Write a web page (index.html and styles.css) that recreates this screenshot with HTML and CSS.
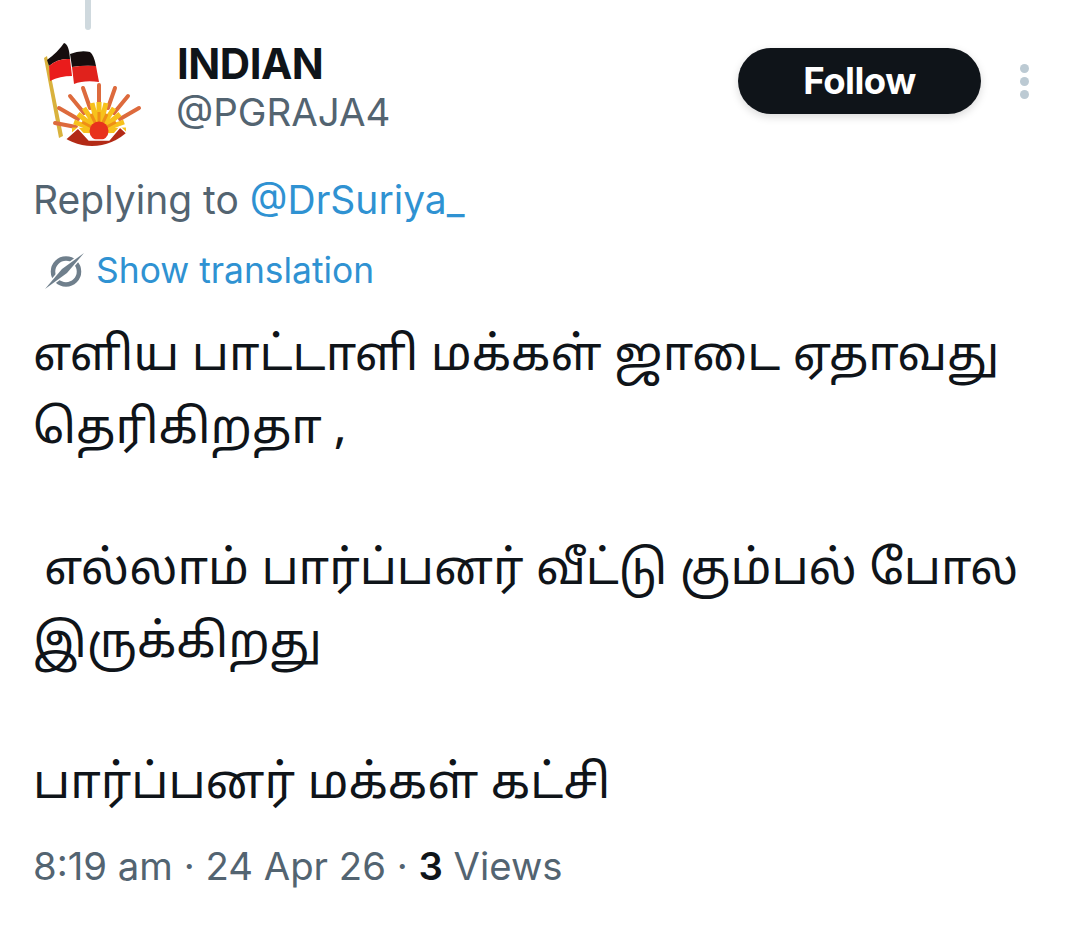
FILE: index.html
```html
<!DOCTYPE html>
<html lang="en">
<head>
    <meta charset="UTF-8" />
    <title>INDIAN on X</title>
    <link rel="stylesheet" href="styles.css">
</head>
<body>
    <div class="thread-line"></div>

    <header class="author">
        <svg class="avatar" viewBox="42 41 100 106" width="100" height="106" aria-label="Avatar">
            <defs>
                <filter id="soft"><feGaussianBlur stdDeviation="0.5"/></filter>
                <clipPath id="round"><circle cx="92" cy="95" r="51"/></clipPath>
            </defs>
            <g filter="url(#soft)">
                <path d="M44 58 L47 56 L63 136 L59 138Z" fill="#d9b23e"/>
                <path d="M47 60 Q58 52 64 43 Q69 44 70 59 Q58 58 49 66Z" fill="#15100f"/>
                <path d="M49 66 Q58 58 70 59 L72 76 Q60 76 50 81Z" fill="#ea1f1a"/>
                <path d="M70 54 Q80 50 90 52 Q94 55 96 66 Q84 65 72 67Z" fill="#15100f"/>
                <path d="M72 67 Q84 65 96 66 L99 82 Q84 80 74 84Z" fill="#e0201c"/>
                <path d="M55 123 L76 127 M59 108 L78 119 M70 96 L84 113 M83 88 L90 108 M99 85 V106 M115 88 L108 108 M128 96 L114 113 M139 108 L120 119" stroke="#dd6a3c" stroke-width="4" stroke-linecap="round"/>
                <path d="M72 130 L99 131 M74 122 L99 131 M78 114 L99 131 M84 108 L99 131 M92 103 L99 131 M99 102 V131 M106 103 L99 131 M114 108 L99 131 M120 114 L99 131 M124 122 L99 131 M126 130 L99 131" stroke="#f7c11c" stroke-width="5"/>
                <path d="M82 122 L99 131 M91 114 L99 131 M99 112 V131 M107 114 L99 131 M116 122 L99 131" stroke="#ef8f14" stroke-width="3"/>
                <circle cx="99" cy="131" r="9.5" fill="#e8311f"/>
                <g clip-path="url(#round)">
                    <path d="M60 144 L78 128 L89 140 L109 140 L120 127 L134 140 L130 150 L62 150Z" fill="#b32a18" stroke="#fff" stroke-width="1.5"/>
                </g>
            </g>
        </svg>
        <div class="names">
            <div class="display-name">INDIAN</div>
            <div class="handle">@PGRAJA4</div>
        </div>
        <button class="follow-btn">Follow</button>
        <div class="more-dots"><span></span><span></span><span></span></div>
    </header>

    <div class="replying">Replying to <a href="#">@DrSuriya_</a></div>

    <div class="translate">
        <svg class="translate-icon" viewBox="44 250 42 40" width="42" height="40" aria-hidden="true">
            <circle cx="66" cy="270.5" r="13" fill="none" stroke="#6f7f8c" stroke-width="4.5"/>
            <path d="M45 288 L62 268 L84 252 L67 272Z" fill="#fff" stroke="#fff" stroke-width="3"/>
            <path d="M45 288 L62 268 L84 252 L67 272Z" fill="#6f7f8c"/>
        </svg>
        <a href="#">Show translation</a>
    </div>

    <div class="tweet-text">
        <p>எளிய பாட்டாளி மக்கள் ஜாடை ஏதாவது தெரிகிறதா ,</p>
        <p class="indent">எல்லாம் பார்ப்பனர் வீட்டு கும்பல் போல இருக்கிறது</p>
        <p>பார்ப்பனர் மக்கள் கட்சி</p>
    </div>

    <div class="meta">8:19 am · 24 Apr 26 · <strong>3</strong> Views</div>
</body>
</html>
```

FILE: styles.css
```css
body {
    font-family: Inter, "Liberation Sans", sans-serif;
    margin: 0;
    padding: 0 34px;
    height: 925px;
    box-sizing: border-box;
    overflow: hidden;
    background-color: #ffffff;
    color: #0f1419;
}
a {
    color: #2f92d2;
    text-decoration: none;
}
.thread-line {
    width: 6px;
    height: 30px;
    margin-left: 51px;
    border-radius: 0 0 3px 3px;
    background-color: #cfd9de;
}
.author {
    display: flex;
    align-items: flex-start;
    margin-top: 11px;
}
.avatar {
    flex: none;
    margin-left: 8px;
}
.names {
    margin-left: 35px;
    flex: 1;
}
.display-name {
    font-size: 42px;
    font-weight: 700;
    line-height: 46px;
    letter-spacing: -0.5px;
}
.handle {
    margin-left: -1px;
    font-size: 38.5px;
    line-height: 50px;
    color: #536471;
}
.follow-btn {
    width: 243px;
    height: 66px;
    margin-top: 7px;
    border: none;
    border-radius: 33px;
    background-color: #0f1419;
    color: #fff;
    font: 700 36.5px Inter, sans-serif;
    letter-spacing: -0.5px;
    box-shadow: 0 3px 8px rgba(0,0,0,0.15);
}
.more-dots {
    display: flex;
    flex-direction: column;
    gap: 4px;
    margin: 23px 17px 0 39px;
}
.more-dots span {
    width: 9px;
    height: 9px;
    border-radius: 50%;
    background-color: #bccad3;
}
.replying {
    margin-top: 28px;
    margin-left: -1px;
    font-size: 39px;
    line-height: 50px;
    color: #536471;
}
.translate {
    display: flex;
    align-items: center;
    margin-top: 25px;
    margin-left: 10px;
    font-size: 35.4px;
    line-height: 42px;
}
.translate-icon {
    margin-right: 10px;
}
.tweet-text {
    margin-top: 30px;
    margin-left: -1px;
    font-family: "Noto Sans Tamil", "Noto Sans", "DejaVu Sans", sans-serif;
    font-size: 47.75px;
    line-height: 73px;
}
.tweet-text p {
    margin: 0 0 68px;
}
.tweet-text p.indent {
    text-indent: 11px;
}
.tweet-text p:last-child {
    margin-bottom: 0;
}
.meta {
    margin-top: 18px;
    margin-left: -1px;
    font-size: 38.3px;
    line-height: 50px;
    color: #536471;
}
.meta strong {
    font-weight: 600;
    color: #0f1419;
}
```
